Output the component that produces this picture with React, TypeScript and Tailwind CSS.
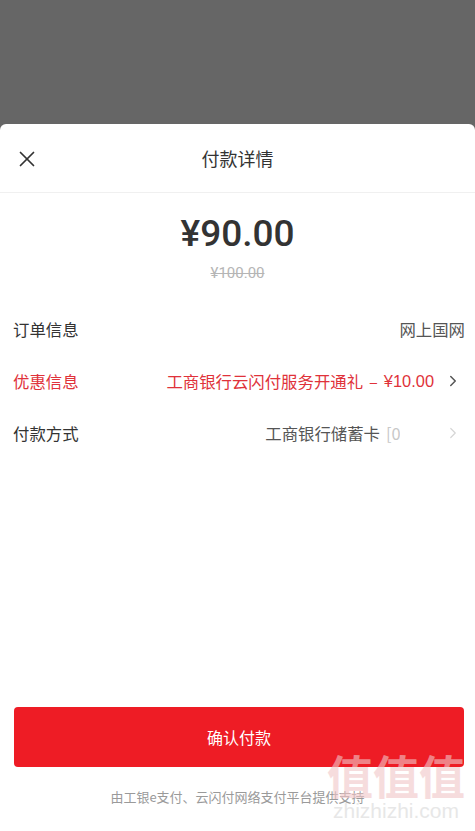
import { X, ChevronRight } from 'lucide-react'

const font = { fontFamily: '"Noto Sans CJK SC", "Liberation Sans", sans-serif' }

export default function App() {
  return (
    <div className="w-[475px] h-[831px] bg-[#666666] flex flex-col overflow-hidden" style={font}>
      <div className="h-[124px] shrink-0" />
      <div className="flex-1 bg-white rounded-t-[6px] flex flex-col relative">
        <div className="h-[69px] flex items-center justify-center relative border-b border-[#f0f0f0]">
          <X className="absolute left-[14px] top-[22px] w-[26px] h-[26px] text-[#333]" strokeWidth={1.6} />
          <span className="text-[18px] text-[#333]">付款详情</span>
        </div>

        <div className="flex flex-col items-center pt-[17px]">
          <div className="text-[37px] leading-[48px] font-medium text-[#333]" style={{ fontFamily: 'Roboto, "Liberation Sans", sans-serif' }}>
            ¥90.00
          </div>
          <div className="text-[15px] leading-[22px] mt-[4px] text-[#b5b5b5] line-through" style={{ fontFamily: 'Roboto, "Liberation Sans", sans-serif' }}>
            ¥100.00
          </div>
        </div>

        <div className="flex flex-col mt-[19px] pl-[13px] pr-[10px]">
          <div className="h-[52px] flex items-center justify-between text-[16.4px]">
            <span className="text-[#333]">订单信息</span>
            <span className="text-[#555]">网上国网</span>
          </div>
          <div className="h-[52px] flex items-center justify-between text-[16.4px]">
            <span className="text-[#e0323a]">优惠信息</span>
            <span className="flex items-center text-[#e0323a]">
              工商银行云闪付服务开通礼<span className="mx-[6px]">–</span>
              <span style={{ fontFamily: '"Liberation Sans", sans-serif' }} className="font-medium">¥10.00</span>
              <ChevronRight className="w-[18px] h-[18px] text-[#555] ml-[10px] mr-[3px]" strokeWidth={2} />
            </span>
          </div>
          <div className="h-[52px] flex items-center justify-between text-[16.4px]">
            <span className="text-[#333]">付款方式</span>
            <span className="flex items-center">
              <span className="text-[#555]">工商银行储蓄卡</span>
              <span className="text-[#c8c8c8] ml-[6px] w-[14px] overflow-hidden">[0</span>
              <ChevronRight className="w-[18px] h-[18px] text-[#d6d6d6] ml-[44px] mr-[3px]" strokeWidth={1.6} />
            </span>
          </div>
        </div>

        <div className="flex-1" />

        <div className="pl-[14px] pr-[11px]">
          <button className="w-full h-[60px] rounded-[4px] bg-[#ee1c25] text-white text-[16px]">确认付款</button>
        </div>
        <div className="text-center text-[13px] text-[#9a9a9a] mt-[20px] mb-[25px]">由工银e支付、云闪付网络支付平台提供支持</div>

        <div className="absolute right-[10px] bottom-[8px] flex flex-col items-center pointer-events-none select-none opacity-60">
          <span className="text-[46px] leading-[50px] text-[#f1c6c8] font-bold">值值值</span>
          <span className="text-[21px] leading-[24px] text-[#d8d8d8]" style={{ fontFamily: '"Liberation Sans", sans-serif' }}>zhizhizhi.com</span>
        </div>
      </div>
    </div>
  )
}
